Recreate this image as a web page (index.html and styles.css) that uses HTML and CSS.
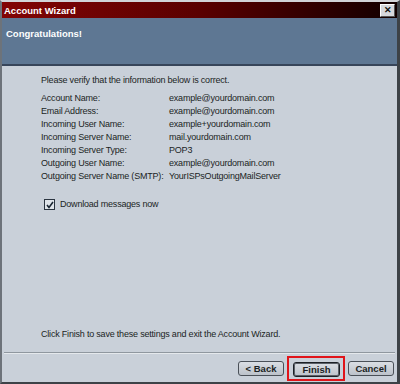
FILE: index.html
```html
<!DOCTYPE html>
<html>
<head>
    <title>Account Wizard</title>
    <link rel="stylesheet" href="styles.css">
</head>
<body>
    <div class="window">
        <div class="titlebar">
            <span class="title">Account Wizard</span>
            <span class="close-btn">&#x2715;</span>
        </div>
        <div class="header">
            <h1>Congratulations!</h1>
        </div>
        <div class="content">
            <p class="intro">Please verify that the information below is correct.</p>
            <div class="info">
                <span>Account Name:</span><span>example@yourdomain.com</span>
                <span>Email Address:</span><span>example@yourdomain.com</span>
                <span>Incoming User Name:</span><span>example+yourdomain.com</span>
                <span>Incoming Server Name:</span><span>mail.yourdomain.com</span>
                <span>Incoming Server Type:</span><span>POP3</span>
                <span>Outgoing User Name:</span><span>example@yourdomain.com</span>
                <span>Outgoing Server Name (SMTP):</span><span>YourISPsOutgoingMailServer</span>
            </div>
            <label class="check">
                <span class="box">
                    <svg width="8" height="8" viewBox="0 0 8 8"><path d="M1 4 L3 6.5 L7 1" fill="none" stroke="#1a2633" stroke-width="1.6"/></svg>
                </span>
                Download messages now
            </label>
            <p class="finish-note">Click Finish to save these settings and exit the Account Wizard.</p>
        </div>
        <div class="separator"></div>
        <div class="buttons">
            <a href="#" class="btn">&lt; Back</a>
            <span class="highlight"><a href="#" class="btn btn-default">Finish</a></span>
            <a href="#" class="btn">Cancel</a>
        </div>
    </div>
</body>
</html>
```

FILE: styles.css
```css
body {
    margin: 0;
    font-family: 'Liberation Sans', Arial, sans-serif;
    font-size: 9px;
    color: #1b1f24;
}

.window {
    width: 400px;
    height: 384px;
    box-sizing: border-box;
    display: flex;
    flex-direction: column;
    background-color: #c9d0d9;
    border-top: 2px solid #d2d4d8;
    border-left: 2px solid #6d737a;
    border-right: 3px solid #3d4247;
    border-bottom: 2px solid #3d4247;
}

.titlebar {
    height: 16px;
    display: flex;
    align-items: center;
    justify-content: space-between;
    padding: 0 2px 0 2px;
    background: linear-gradient(to right, #820404, #5a0000 50%, #120000);
}

.title {
    color: #fff;
    font-weight: bold;
    font-size: 9.5px;
}

.close-btn {
    width: 13px;
    height: 11px;
    line-height: 11px;
    text-align: center;
    font-size: 9px;
    font-weight: bold;
    color: #111;
    background-color: #d6d8dc;
    border: 1px solid;
    border-color: #fff #555 #555 #fff;
}

.header {
    height: 46px;
    background-color: #5e7793;
    border-bottom: 2px solid #37455a;
}

h1 {
    margin: 0;
    padding: 10px 0 0 4px;
    font-size: 9.5px;
    font-weight: bold;
    color: #fff;
}

.content {
    flex: 1;
    display: flex;
    flex-direction: column;
    padding: 8px 0 11px 39px;
    line-height: 13px;
    letter-spacing: -0.2px;
}

.intro {
    margin: 0 0 5px 0;
}

.info {
    display: grid;
    grid-template-columns: 128px auto;
    white-space: nowrap;
}

.check {
    display: flex;
    align-items: center;
    gap: 5px;
    margin: 15px 0 0 3px;
}

.box {
    width: 9px;
    height: 9px;
    display: flex;
    align-items: center;
    justify-content: center;
    border: 1px solid #2a3440;
    background-color: #dfe4ea;
}

.finish-note {
    margin: auto 0 0 0;
}

.separator {
    margin: 0 2px;
    border-top: 1px solid #8f979f;
    border-bottom: 1px solid #e4e8ec;
}

.buttons {
    display: flex;
    justify-content: flex-end;
    align-items: center;
    gap: 3px;
    padding: 2px 3px 1px 0;
}

.btn {
    width: 44px;
    height: 13px;
    line-height: 13px;
    text-align: center;
    font-weight: bold;
    font-size: 9.5px;
    color: #1b1f24;
    text-decoration: none;
    background: linear-gradient(#dadee4, #bcc2ca);
    border: 1px solid #4a5058;
    border-radius: 3px;
}

.highlight {
    display: flex;
    padding: 4px 3px 2px 4px;
    border: 2px solid #e0141a;
}

.btn-default {
    width: 45px;
    border: 1px solid #1c2026;
    box-shadow: inset 0 0 0 1px #5a6068;
}
```
